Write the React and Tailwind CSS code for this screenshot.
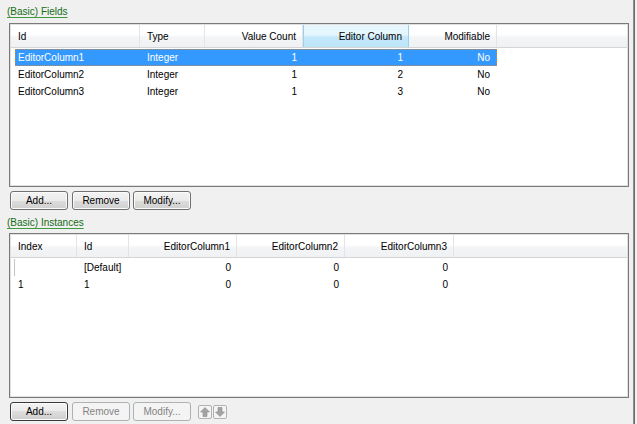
import clsx from "clsx";

const font = { fontFamily: '"Liberation Sans", Arial, sans-serif' };

const fieldCols = [
  { label: "Id", w: "w-[129px]", align: "left" },
  { label: "Type", w: "w-[65px]", align: "left" },
  { label: "Value Count", w: "w-[98px]", align: "right" },
  { label: "Editor Column", w: "w-[106px]", align: "right", hot: true },
  { label: "Modifiable", w: "w-[88px]", align: "right" },
];

const fieldRows = [
  ["EditorColumn1", "Integer", "1", "1", "No"],
  ["EditorColumn2", "Integer", "1", "2", "No"],
  ["EditorColumn3", "Integer", "1", "3", "No"],
];

const instCols = [
  { label: "Index", w: "w-[66px]", align: "left" },
  { label: "Id", w: "w-[52px]", align: "left" },
  { label: "EditorColumn1", w: "w-[108px]", align: "right" },
  { label: "EditorColumn2", w: "w-[108px]", align: "right" },
  { label: "EditorColumn3", w: "w-[109px]", align: "right" },
];

const instRows = [
  ["", "[Default]", "0", "0", "0"],
  ["1", "1", "0", "0", "0"],
];

function SectionLabel({ children, className }) {
  return (
    <div className={clsx("ml-[7px] h-[12px] text-[10px] leading-[12px]", className)}>
      <span className="text-[#146c14] underline decoration-[#3f9a3f] underline-offset-[2px]">{children}</span>
    </div>
  );
}

function Header({ cols }) {
  return (
    <div className="flex h-[23px] border-b border-[#d5d5d5] bg-[linear-gradient(to_bottom,#ffffff_0%,#ffffff_45%,#f4f5f7_55%,#f0f1f3_100%)]">
      {cols.map((c) => (
        <div
          key={c.label}
          className={clsx(
            "flex h-full shrink-0 items-center border-r",
            c.w,
            c.align === "right" ? "justify-end pr-[6px]" : "pl-[7px]",
            c.hot
              ? "border-l border-[#96d2ef] bg-[linear-gradient(to_bottom,#e8f7fe_0%,#e3f5fd_45%,#c4e8fa_55%,#bde5f9_100%)]"
              : "border-[#e2e4e8]"
          )}
        >
          {c.label}
        </div>
      ))}
      <div className="flex-1" />
    </div>
  );
}

function Btn({ children, disabled, strong, className }) {
  return (
    <div
      className={clsx(
        "flex h-[19px] w-[58px] shrink-0 items-center justify-center rounded-[3px] border text-[10px]",
        disabled
          ? "border-[#adb2b5] bg-[#f4f4f4] text-[#838383]"
          : clsx(
              "bg-[linear-gradient(to_bottom,#f3f3f3_0%,#ebebeb_50%,#dddddd_50%,#cfcfcf_100%)] text-black shadow-[inset_0_0_0_1px_#fbfbfb]",
              strong ? "border-[#3a3a3a]" : "border-[#707070]"
            ),
        className
      )}
    >
      {children}
    </div>
  );
}

function ArrowBtn({ down }) {
  return (
    <div className="flex h-[14px] w-[14px] items-center justify-center rounded-[2px] border border-[#adb2b5] bg-[#f4f4f4]">
      <svg width="10" height="10" viewBox="0 0 10 10" className={down ? "rotate-180" : ""}>
        <path d="M5 0.5 L9.5 5 L7 5 L7 9.5 L3 9.5 L3 5 L0.5 5 Z" fill="#a3a3a3" stroke="#8c8c8c" strokeWidth="0.6" />
      </svg>
    </div>
  );
}

function ListBox({ className, children }) {
  return (
    <div className={clsx("ml-[9px] w-[620px] border border-[#7a7a7a]", className)}>
      <div className="h-full w-full border border-[#e0e0e0] bg-white">{children}</div>
    </div>
  );
}

export default function App() {
  return (
    <div style={font} className="flex h-[424px] w-[637px] bg-[#f0f0f0] text-[10px] text-black">
      <div className="flex w-[633px] flex-col">
        <SectionLabel className="mt-[6px]">(Basic) Fields</SectionLabel>

        <ListBox className="mt-[5px] h-[164px]">
          <Header cols={fieldCols} />
          <div className="mt-[1px]">
            {fieldRows.map((r, i) => (
              <div
                key={i}
                className={clsx(
                  "ml-[4px] flex h-[17px] w-[482px] items-center",
                  i === 0 ? "border border-dotted border-[#c7864a] bg-[#3399ff] text-white" : "border border-transparent"
                )}
              >
                <div className="w-[124px] shrink-0 pl-[2px]">{r[0]}</div>
                <div className="w-[65px] shrink-0 pl-[7px]">{r[1]}</div>
                <div className="w-[98px] shrink-0 pr-[6px] text-right">{r[2]}</div>
                <div className="w-[106px] shrink-0 pr-[6px] text-right">{r[3]}</div>
                <div className="w-[87px] shrink-0 pr-[6px] text-right">{r[4]}</div>
              </div>
            ))}
          </div>
        </ListBox>

        <div className="ml-[10px] mt-[4px] flex gap-[3px]">
          <Btn>Add...</Btn>
          <Btn className="ml-[1px]">Remove</Btn>
          <Btn>Modify...</Btn>
        </div>

        <SectionLabel className="mt-[7px]">(Basic) Instances</SectionLabel>

        <ListBox className="mt-[4px] h-[165px]">
          <Header cols={instCols} />
          <div className="mt-[1px]">
            {instRows.map((r, i) => (
              <div
                key={i}
                className={clsx(
                  "ml-[3px] flex h-[17px] items-center",
                  i === 0 ? "border-l border-[#c4c4c4]" : "border-l border-transparent"
                )}
              >
                <div className="w-[62px] shrink-0 pl-[3px]">{r[0]}</div>
                <div className="w-[52px] shrink-0 pl-[7px]">{r[1]}</div>
                <div className="w-[108px] shrink-0 pr-[6px] text-right">{r[2]}</div>
                <div className="w-[108px] shrink-0 pr-[6px] text-right">{r[3]}</div>
                <div className="w-[109px] shrink-0 pr-[6px] text-right">{r[4]}</div>
              </div>
            ))}
          </div>
        </ListBox>

        <div className="ml-[10px] mt-[4px] flex items-center gap-[3px]">
          <Btn strong>Add...</Btn>
          <Btn disabled className="ml-[1px]">Remove</Btn>
          <Btn disabled>Modify...</Btn>
          <div className="ml-[4px] flex gap-[1px]">
            <ArrowBtn />
            <ArrowBtn down />
          </div>
        </div>
      </div>
      <div className="w-[1px] bg-[#8d8d8d]" />
      <div className="w-[1px] bg-[#6d6d6d]" />
      <div className="flex-1" />
    </div>
  );
}
